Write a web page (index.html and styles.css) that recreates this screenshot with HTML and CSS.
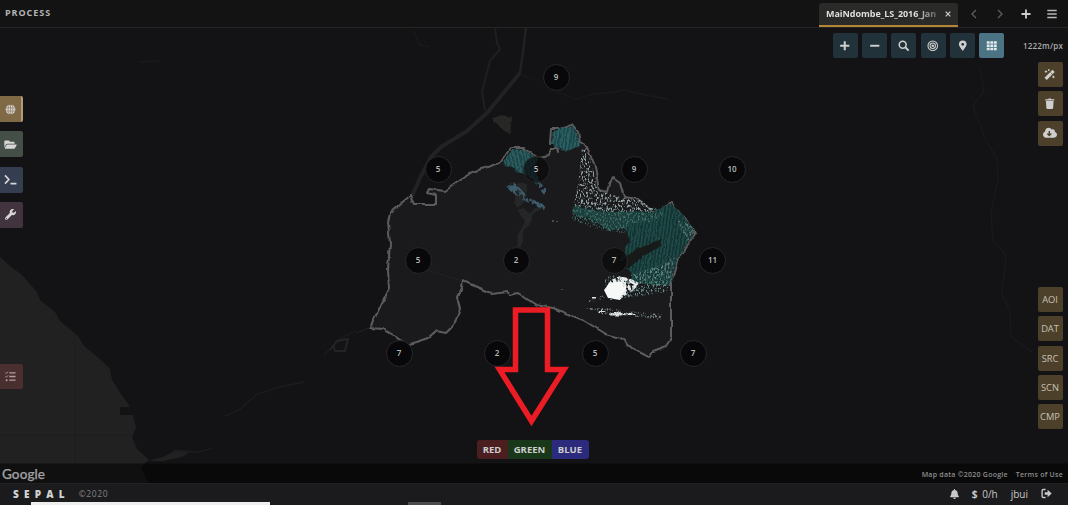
FILE: index.html
```html
<!DOCTYPE html>
<html lang="en">
<head>
<meta charset="utf-8">
<title>SEPAL</title>
<link rel="stylesheet" href="styles.css">
</head>
<body>
<div class="app">
  <header class="header">
    <h1 class="title">PROCESS</h1>
    <nav class="tabs">
      <div class="tab"><span class="tab-name">MaiNdombe_LS_2016_Jan</span><svg class="tab-close" viewBox="0 0 6 6"><path d="M.7.7 5.3 5.3M5.3.7.7 5.3"/></svg></div>
      <svg class="nav-icon dim" viewBox="0 0 12 12"><path d="M8 2 4 6l4 4"/></svg>
      <svg class="nav-icon dim" viewBox="0 0 12 12"><path d="M4 2l4 4-4 4"/></svg>
      <svg class="nav-icon plus" viewBox="0 0 12 12"><path d="M6 1.500v9M1.500 6h9"/></svg>
      <svg class="nav-icon menu" viewBox="0 0 12 12"><path d="M1.300 2.500h9.400M1.300 6h9.400M1.300 9.500h9.400"/></svg>
    </nav>
  </header>

  <main class="map">
    <svg class="terrain" viewBox="0 28 1068 455">
      <defs>
        <pattern id="stripes" width="3.6" height="20" patternUnits="userSpaceOnUse" patternTransform="rotate(8)">
          <rect width="3.6" height="20" fill="#2b6163"/><rect width="1.5" height="20" fill="#1a4044"/>
        </pattern>
        <pattern id="slanted" width="3.6" height="20" patternUnits="userSpaceOnUse" patternTransform="rotate(-12)">
          <rect width="3.6" height="20" fill="#2b5c5e"/><rect width="1.5" height="20" fill="#1a4043"/>
        </pattern>
        <pattern id="deep" width="3.4" height="20" patternUnits="userSpaceOnUse" patternTransform="rotate(8)">
          <rect width="3.4" height="20" fill="#1f4a48"/><rect width="1.5" height="20" fill="#11302f"/>
        </pattern>
        <filter id="speckle" x="0" y="0" width="1" height="1" color-interpolation-filters="sRGB">
          <feTurbulence type="fractalNoise" baseFrequency=".6 .38" numOctaves="2" seed="8"/>
          <feColorMatrix values="0 0 0 0 1 0 0 0 0 1 0 0 0 0 1 5 0 0 0 -2.45"/>
          <feComposite in="SourceGraphic" operator="in"/>
        </filter>
        <filter id="dense" x="0" y="0" width="1" height="1" color-interpolation-filters="sRGB">
          <feTurbulence type="fractalNoise" baseFrequency=".3 .22" numOctaves="2" seed="3"/>
          <feColorMatrix values="0 0 0 0 1 0 0 0 0 1 0 0 0 0 1 9 0 0 0 -3.7"/>
          <feComposite in="SourceGraphic" operator="in"/>
        </filter>
        <filter id="frayed" x="-.1" y="-.1" width="1.2" height="1.2" color-interpolation-filters="sRGB">
          <feTurbulence type="fractalNoise" baseFrequency=".2" numOctaves="2" seed="5"/>
          <feDisplacementMap in="SourceGraphic" scale="3.5" xChannelSelector="R" yChannelSelector="G"/>
        </filter>
        <filter id="wobble" x="-.1" y="-.1" width="1.2" height="1.2" color-interpolation-filters="sRGB">
          <feTurbulence type="fractalNoise" baseFrequency=".1" numOctaves="2" seed="2"/>
          <feDisplacementMap in="SourceGraphic" scale="4" xChannelSelector="R" yChannelSelector="G"/>
          <feGaussianBlur stdDeviation=".35"/>
        </filter>
      </defs>
      <rect y="28" width="1068" height="455" fill="#131315"/>
      <path class="water" d="M0 257 10 266 22 275 30 284 37 292 40 300 55 312 60 321 78 336 84 346 101 360 110 369 112 380 123 397 129 405 129 407H120V415H133L136 428 132 437 137 449 149 460 145 463 141 468 148 483H0Z"/>
      <path d="M75 336V463M0 435H133" fill="none" stroke="#1e1e1f"/>
      <path class="water" d="M149 461 165 456 176 450 191 451 182 457 163 461ZM57 311 69 318 60 313Z"/>
      <path class="stream" d="M178 451 198 452 212 448M225 416 239 410 256 395 280 387 304 382M324 355 340 339 356 330"/>
      <path d="M330 350 337 341 348 339 345 351 335 351 333 345" fill="none" stroke="#242425" stroke-width="2"/>
      <path d="M356 333 371 327" stroke="#232325" fill="none"/>
      <path d="M526 27 523 52 520 73 487 113" fill="none" stroke="#212122" stroke-width="2.600"/>
      <path d="M520 73 487 113 467 131 441 147 431 157 420 178 412 196" fill="none" stroke="#222223" stroke-width="4" stroke-linejoin="round"/>
      <path d="M495 27 497 43 500 49 490 61 482 92 485 111" fill="none" stroke="#1f1f20" stroke-width="2"/>
      <path d="M492 118 502 115 512 117 510 135 498 125Z" fill="#272725" filter="url(#frayed)"/>
      <path class="stream faint" d="M520 74 534 80M556 92 576 99 593 94 615 92 624 90 650 96 668 99M980 70 984 91 973 106 984 136 997 159 998 180 991 213 993 240 1006 255 1002 295 1010 310 1011 337 1032 352M140 62 160 61M413 30 420 45 430 47"/>

      <path id="boundary" filter="url(#wobble)" class="region" d="M390 213 400 204 410 196 414 204H436V195L427 193 429 189 437 190 445 191 472 172 500 163 511 148H523L537 157 549 155 551 149 557 149 558 152 557 143 550 143 551 129 560 129 567 127 572 124 578 132 580 143 587 147 595 167 599 190 607 192 609 184 613 178 620 183 624 197 638 199 652 211 663 210 671 202 683 217 693 228 695 234 678 258 671 283V313L671 340 667 346 653 351 649 357 633 349 621 338 606 334 583 320 553 308 536 305 518 293 511 295 507 292 493 294 479 288 463 281 462 288 457 298 460 309 454 325 446 333 436 331 428 338 419 341 406 345 395 336 383 329 370 328 389 288 388 270 390 243 388 223Z"/>
      <path filter="url(#wobble)" d="M516 210 524 208 530 215 538 206 544 207 534 214 531 222 524 229 521 247 516 247 519 234 524 222 515 205 515 184 526 184 526 200Z" fill="#252627"/>
      <path d="M427 270 462 281" fill="none" stroke="#222224"/>
      <g filter="url(#frayed)">
        <path d="M552 132 561 128 573 126 578 136 580 146 565 152 551 144Z" fill="url(#stripes)"/>
        <path d="M502 163 512 149 524 150 538 159 534 167 541 186 524 174Z" fill="url(#slanted)"/>
        <path d="M628 211 653 212 671 203 684 217 693 228 693 235 678 258 669 286 632 283 632 273 619 262 630 240 624 227Z" fill="url(#deep)"/>
        <path d="M573 206 599 211 631 211 635 221 625 229 607 230 594 220 573 214Z" fill="#1c3f3d"/>
      </g>
      <path d="M573 204 592 203 633 211 650 205 666 214 650 222 630 223 624 233 600 230 572 220Z" fill="#3f6d65" filter="url(#speckle)"/>
      <path d="M616 264 635 250 662 239 659 247 642 257 629 268 612 269Z" fill="#181919" filter="url(#frayed)"/>
      <path d="M574 205 579 178 582 148 587 148 599 191 624 198 640 200 656 211 642 211 610 212Z" fill="#98a5a7" filter="url(#speckle)"/>
      <path d="M505 184 514 182 529 198 546 205 544 210 523 200 509 190ZM530 176 534 176 547 190 544 195Z" fill="#3d5c6b" filter="url(#dense)"/>
      <path d="M604 281 610 275 626 277 669 262 668 292 625 298 610 298Z" fill="#648984" filter="url(#speckle)"/>
      <path d="M605 289 611 280 620 276 634 280 640 284 631 292 621 298 609 298Z" fill="#e4e8e8" filter="url(#dense)"/>
      <path d="M604 290 609 284 620 281 626 288 620 300 608 298Z" fill="#f6f7f7" filter="url(#frayed)"/>
      <path d="M600 311h5v2h-5ZM609 313h12v2.500h-12ZM618 313h17v2h-17ZM592 297h4v1.500h-4Z" fill="#dfe4e4" filter="url(#frayed)"/>
      <path d="M586 308 606 308 637 312 662 314 660 320 641 317 601 314ZM588 301 604 295 606 298 587 303Z" fill="#84918f" filter="url(#speckle)"/>
      <path d="M677 220 691 225 695 235 687 241ZM664 263 675 257 672 283 666 286Z" fill="#5d7572" filter="url(#speckle)"/>
      <path d="M552 220h2v2h-2ZM556 221h2v1h-2ZM561 289h2v1h-2Z" fill="#454f4e"/>
      <rect y="463.500" width="1068" height="19.500" fill="#000" fill-opacity=".5"/>
    </svg>

    <span class="scene" style="left:556px;top:49px">9</span>
    <span class="scene" style="left:438px;top:141px">5</span>
    <span class="scene clear" style="left:536px;top:141px">5</span>
    <span class="scene" style="left:634px;top:141px">9</span>
    <span class="scene" style="left:732px;top:141px">10</span>
    <span class="scene" style="left:418px;top:232.500px">5</span>
    <span class="scene" style="left:516px;top:232.500px">2</span>
    <span class="scene clear" style="left:614px;top:232.500px">7</span>
    <span class="scene" style="left:712.500px;top:232.500px">11</span>
    <span class="scene" style="left:399px;top:325px">7</span>
    <span class="scene" style="left:497px;top:325px">2</span>
    <span class="scene" style="left:595px;top:325px">5</span>
    <span class="scene" style="left:693px;top:325px">7</span>
    <svg class="terrain" viewBox="0 28 1068 455"><path class="arrow" d="M515.500 310H547.500V369.500H564L531.500 421 499.500 369.500H515.500Z"/></svg>

    <aside class="rail">
      <a class="rail-item process"><svg viewBox="0 0 12 12"><circle cx="6" cy="6" r="5.300" fill="currentColor"/><path d="M6 .7v10.600M.7 4.300h10.600M.7 7.700h10.600" stroke="#806a45" stroke-width=".6"/><ellipse cx="6" cy="6" rx="2.600" ry="5.300" fill="none" stroke="#806a45" stroke-width=".6"/></svg></a>
      <a class="rail-item files"><svg class="wide" viewBox="0 0 576 512"><path fill="currentColor" d="M573 295 500 420c-9 16-30 28-49 28H45c-18 0-30-20-21-36L97 287c9-16 31-31 52-31h403c18 0 30 23 21 39zM144 224h336v-48c0-26-22-48-48-48H272l-64-64H48c-26 0-48 22-48 48v278l69-119c16-27 45-47 75-47z"/></svg></a>
      <a class="rail-item console"><svg class="wide" viewBox="0 0 14 12"><path d="M1 1.500 5.200 6 1 10.500M7 10.500h6.500" fill="none" stroke="currentColor" stroke-width="1.800"/></svg></a>
      <a class="rail-item tools"><svg viewBox="0 0 512 512"><path fill="currentColor" d="M508 109c-2-9-13-12-20-5l-74 74-68-11-11-68 74-74c7-7 4-18-5-20C302-19 246 38 230 78c-15 39-16 77-5 111L19 395c-26 26-26 68 0 94s68 26 94 0l207-206c34 12 73 9 109-6 67-28 95-104 79-168zM64 472a24 24 0 1 1 0-48 24 24 0 0 1 0 48z"/></svg></a>
      <a class="rail-item tasks"><svg viewBox="0 0 12 12"><path d="M4.700 2h6.800M4.700 6h6.800M4.700 10h6.800" stroke="currentColor" stroke-width="1.500"/><path d="M.4 1.800l1.100 1L3.300.8M.4 5.800l1.100 1 1.800-2" fill="none" stroke="currentColor"/><circle cx="1.800" cy="10" r="1.100" fill="currentColor"/></svg></a>
    </aside>

    <div class="toolbar">
      <a class="tool"><svg viewBox="0 0 12 12"><path d="M6 1.200v9.600M1.200 6h9.600" stroke="currentColor" stroke-width="2.100"/></svg></a>
      <a class="tool"><svg viewBox="0 0 12 12"><path d="M1.200 6h9.600" stroke="currentColor" stroke-width="2"/></svg></a>
      <a class="tool"><svg viewBox="0 0 12 12"><circle cx="4.900" cy="4.900" r="3.600" fill="none" stroke="currentColor" stroke-width="1.600"/><path d="M7.600 7.600l3.500 3.500" stroke="currentColor" stroke-width="2"/></svg></a>
      <a class="tool"><svg viewBox="0 0 12 12" fill="none" stroke="currentColor" stroke-width="1.100"><circle cx="6" cy="6" r="5"/><circle cx="6" cy="6" r="2.800"/><circle cx="6" cy="6" r=".8" fill="currentColor"/></svg></a>
      <a class="tool"><svg viewBox="0 0 12 12"><path fill="currentColor" fill-rule="evenodd" d="M6 .5a4 4 0 0 0-4 4C2 6.800 4 8.500 6 11.500 8 8.500 10 6.800 10 4.500a4 4 0 0 0-4-4Zm0 2.500a1.500 1.500 0 1 1 0 3 1.500 1.500 0 0 1 0-3Z"/></svg></a>
      <a class="tool active"><svg viewBox="0 0 12 12"><path fill="currentColor" d="M.8 1.300h3v2.700h-3ZM4.500 1.300h3v2.700h-3ZM8.200 1.300h3v2.700h-3ZM.8 4.700h3v2.700h-3ZM4.500 4.700h3v2.700h-3ZM8.200 4.700h3v2.700h-3ZM.8 8.100h3v2.700h-3ZM4.500 8.100h3v2.700h-3ZM8.200 8.100h3v2.700h-3Z"/></svg></a>
      <span class="scale">1222m/px</span>
    </div>

    <div class="actions">
      <a class="action"><svg viewBox="0 0 12 12"><path d="M1.700 10.300 10 2" stroke="currentColor" stroke-width="3.300"/><path d="M6.800 3.600l1.700 1.700" stroke="#4d402b" stroke-width=".7"/><path d="M2 1.500v2.500M.8 2.700h2.500M5 .2v1.800M4.100 1.100h1.800M9.800 7v2.600M8.500 8.300h2.600" stroke="currentColor" stroke-width="1"/></svg></a>
      <a class="action"><svg viewBox="0 0 12 12"><path fill="currentColor" d="M1.300 1.200h3L4.900.5h2.200l.6.700h3v1.300H1.300ZM2 3.200h8l-.5 7.300q-.1 1-1 1h-5q-.9 0-1-1Z"/></svg></a>
      <a class="action"><svg class="wide" viewBox="0 0 640 512"><path fill="currentColor" fill-rule="evenodd" d="M538 227c4-11 6-23 6-35 0-53-43-96-96-96-20 0-38 6-53 16C367 64 315 32 256 32c-88 0-160 72-160 160v8C40 220 0 274 0 336c0 80 64 144 144 144h368c71 0 128-57 128-128 0-62-44-114-102-125zM403 314 299 420c-6 6-16 6-22 0L173 314c-10-10-3-27 11-27h72V176h64v111h72c14 0 21 17 11 27z"/></svg></a>
    </div>

    <div class="steps">
      <a class="action">AOI</a><a class="action">DAT</a><a class="action">SRC</a><a class="action">SCN</a><a class="action">CMP</a>
    </div>

    <div class="bands"><span class="red">RED</span><span class="green">GREEN</span><span class="blue">BLUE</span></div>

    <div class="attribution"><span class="google">Google</span><span class="credit">Map data ©2020 Google</span><span>Terms of Use</span></div>
  </main>

  <footer class="footer">
    <strong class="brand">SEPAL</strong><span class="year">©2020</span>
    <div class="account">
      <svg class="bell" viewBox="0 0 448 512"><path fill="currentColor" d="M224 512c35 0 64-29 64-64H160c0 35 29 64 64 64zm215-150c-19-21-55-52-55-154 0-78-54-140-128-155V32a32 32 0 0 0-64 0v21C118 68 64 130 64 208c0 102-36 133-55 154-6 6-9 14-9 22 0 16 13 32 32 32h384c19 0 32-16 32-32 0-8-3-16-9-22z"/></svg>
      <span class="cost"><b>$</b> 0/h</span><span class="user">jbui</span>
      <svg class="exit" viewBox="0 0 12 12"><path d="M5 1.700H2.500Q1.200 1.700 1.200 3v6q0 1.300 1.300 1.300H5" fill="none" stroke="currentColor" stroke-width="1.500"/><path fill="currentColor" d="M4 4.700h3.200V2L11.700 6 7.200 10V7.300H4Z"/></svg>
    </div>
    <div class="scroll-edge"><i class="thumb"></i><i class="notch"></i></div>
  </footer>
</div>
</body>
</html>
```
FILE: styles.css
```css
* { box-sizing: border-box; }
body { margin: 0; background: #131315; color: #c8c8c8; font-family: "Open Sans", "Noto Sans", sans-serif; }
.app { width: 1068px; height: 505px; display: grid; grid-template-rows: 28px 455px 22px; overflow: hidden; }
.header { display: flex; justify-content: space-between; background: #131313; border-bottom: 1px solid #252525; }
.title { margin: 0; padding-left: 5px; font-size: 9px; line-height: 26px; letter-spacing: .95px; color: #b4b4b4; }
.tabs { display: flex; align-items: center; padding-right: 10px; }
.tab { display: flex; align-items: center; width: 139px; height: 24px; margin: 3px 10px 0 0; padding: 0 7px 0 7px; background: #2a2a29; border-bottom: 2px solid #b48534; border-radius: 3px 3px 0 0; }
.tab-name { flex: 1; overflow: hidden; white-space: nowrap; font-size: 9px; font-weight: 700; line-height: 20px; letter-spacing: -.05px; color: #dedede; mask-image: linear-gradient(90deg, #000 80%, #0004); }
.tab-close { width: 6px; height: 6px; margin-left: 7px; fill: none; stroke: #d0d0d0; stroke-width: 1.2; }
.nav-icon { width: 12px; height: 12px; margin-right: 14px; fill: none; stroke: #d0d0d0; stroke-width: 1.7; }
.nav-icon.dim { stroke: #5e5e5e; stroke-width: 1.3; }
.nav-icon.menu { margin-right: 0; stroke: #b8b8b8; }
.nav-icon.plus { stroke-width: 1.8; }

.map { position: relative; overflow: hidden; }
.terrain { position: absolute; inset: 0; width: 1068px; height: 455px; }
.water { fill: #212122; }
.stream { fill: none; stroke: #1d1d1f; stroke-width: 1.3; }
.stream.faint { stroke: #1a1a1c; }
.region { fill: #1a1a1c; stroke: #5c5c5d; stroke-width: 2; stroke-linejoin: round; }
.arrow { fill: none; stroke: #ec1c24; stroke-width: 5.5; stroke-miterlimit: 6; }
.scene { position: absolute; width: 27px; height: 27px; margin: -13.5px; border: 1px solid #28282a; border-radius: 50%; background: #08080a; color: #bdbdbd; font-size: 8px; font-weight: 600; line-height: 24px; text-align: center; }
.scene.clear { background: #08080ab0; }

.rail { position: absolute; inset: 68px auto 0 0; display: flex; flex-direction: column; gap: 9.3px; }
.rail-item { display: flex; align-items: center; justify-content: center; width: 23px; height: 26px; padding-right: 3px; border-radius: 0 2px 2px 0; color: #d6d6d6; }
.rail-item svg { width: 11px; height: 11px; }
.rail-item svg.wide { width: 13px; height: 11px; }
.process { background: #806a45; border-right: 2px solid #b29b76; padding-right: 1px; }
.files { background: #444f47; }
.console { background: #353d50; }
.tools { background: #42343e; }
.tasks { height: 25px; margin-top: 126.500px; background: #4a2f31; color: #b99c9d; }

.toolbar { position: absolute; top: 5px; right: 5px; display: flex; align-items: center; gap: 4.3px; }
.tool, .action { display: flex; align-items: center; justify-content: center; width: 25px; height: 25px; border-radius: 2px; color: #cfcfcf; }
.tool { background: #22323a; }
.tool.active { background: #4b7384; color: #e4ebec; }
.tool svg, .action svg { width: 11.5px; height: 11.5px; }
.action svg.wide { width: 14px; }
.scale { width: 54.500px; text-align: right; font-size: 8px; font-weight: 600; letter-spacing: .2px; color: #ababab; }
.actions, .steps { position: absolute; right: 5.500px; display: flex; flex-direction: column; gap: 4.350px; }
.actions { top: 34px; }
.steps { top: 259px; }
.action { background: #4d402b; font-size: 9.300px; }
.steps .action { color: #c8c0b3; font-weight: 500; }

.bands { position: absolute; left: 476.500px; top: 412px; display: flex; height: 19px; border-radius: 3px; overflow: hidden; font-size: 9.500px; font-weight: 700; line-height: 19px; text-align: center; color: #cdcdcd; }
.red { width: 31px; background: #4b1e20; }
.green { width: 44px; background: #193719; }
.blue { width: 37px; background: #2b2a7c; }
.attribution { position: absolute; inset: auto 5px 0 2px; display: flex; align-items: center; gap: 8px; height: 19px; padding-top: 2px; font-size: 7px; font-weight: 600; letter-spacing: .25px; color: #8e8e8e; }
.google { margin: -2px auto 0 0; font-family: Lato, sans-serif; font-size: 13.500px; font-weight: 500; line-height: 18px; color: #a0a0a0; letter-spacing: .1px; -webkit-text-stroke: .25px #a0a0a0; }

.footer { position: relative; display: flex; align-items: center; height: 22px; padding: 0 16px 2px 13px; background: #1b1b1d; border-top: 1px solid #222224; font-size: 9px; }
.brand { font-weight: 800; font-size: 10px; letter-spacing: 5.200px; color: #d2d2d2; }
.year { margin-left: 9px; font-size: 8.500px; letter-spacing: .6px; color: #828282; }
.account { display: flex; align-items: center; margin-left: auto; font-size: 10px; line-height: 20px; }
.bell { width: 9px; height: 10px; margin-right: 13px; }
.cost { margin-right: 13px; }
.cost b { margin-right: 2px; }
.user { margin-right: 13px; }
.exit { width: 11px; height: 11px; }
.scroll-edge { position: absolute; inset: auto 0 0; height: 3px; display: flex; align-items: flex-end; }
.thumb { width: 239px; height: 3px; margin-left: 31px; background: #eee; }
.notch { width: 33px; height: 3px; margin-left: 138px; background: #4b4b4b; }
```
